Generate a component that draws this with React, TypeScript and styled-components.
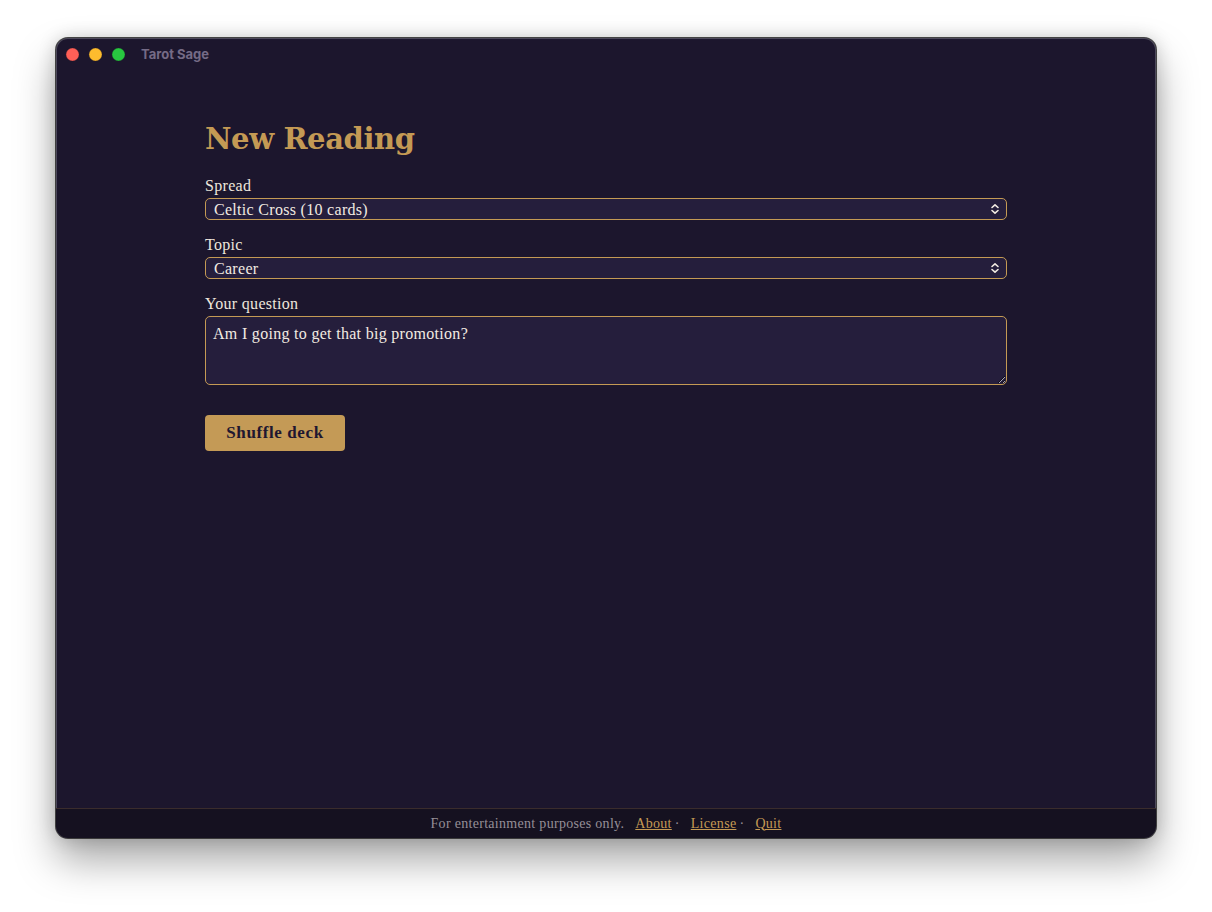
import React, { useState } from 'react';
import styled, { createGlobalStyle } from 'styled-components';

const GlobalStyle = createGlobalStyle`
  html, body {
    margin: 0;
    padding: 0;
    background: #ffffff;
  }
  * {
    box-sizing: border-box;
  }
`;

const Desktop = styled.div`
  width: 1212px;
  height: 912px;
  padding: 38px 56px 0;
  display: flex;
  justify-content: center;
  align-items: flex-start;
`;

const Window = styled.div`
  width: 1100px;
  height: 800px;
  border-radius: 12px;
  background: #1c162d;
  display: flex;
  flex-direction: column;
  overflow: hidden;
  box-shadow: 0 0 0 1px rgba(40, 40, 40, 0.85),
    inset 0 0 0 1px rgba(255, 255, 255, 0.22), 0 22px 40px rgba(0, 0, 0, 0.35),
    0 0 18px rgba(0, 0, 0, 0.18);
`;

const TitleBar = styled.div`
  height: 32px;
  display: flex;
  align-items: center;
  padding: 0 0 0 10px;
  gap: 10px;
  flex-shrink: 0;
`;

const Light = styled.span<{ $color: string }>`
  width: 13px;
  height: 13px;
  border-radius: 50%;
  background: ${(p) => p.$color};
  box-shadow: inset 0 0 0 0.5px rgba(0, 0, 0, 0.2);
`;

const WindowTitle = styled.span`
  margin-left: 6px;
  font-family: 'Inter', 'Liberation Sans', sans-serif;
  font-weight: 700;
  font-size: 13px;
  color: #756b86;
`;

const Main = styled.main`
  flex: 1;
  padding: 52px 0 0;
  display: flex;
  justify-content: center;
`;

const Form = styled.div`
  width: 802px;
  display: flex;
  flex-direction: column;
  font-family: 'Liberation Serif', 'DejaVu Serif', serif;
  letter-spacing: 0.3px;
`;

const Heading = styled.h1`
  margin: 0 0 20px;
  font-family: 'DejaVu Serif', 'Liberation Serif', serif;
  font-size: 29px;
  font-weight: 700;
  color: #c49a54;
  letter-spacing: -0.4px;
`;

const Field = styled.label`
  display: flex;
  flex-direction: column;
  margin-bottom: 15px;
`;

const Label = styled.span`
  font-size: 16px;
  line-height: 20px;
  color: #eee6dc;
  margin-bottom: 2px;
`;

const SelectWrap = styled.div`
  position: relative;
  height: 22px;
`;

const Select = styled.select`
  appearance: none;
  width: 100%;
  height: 22px;
  padding: 0 24px 0 8px;
  border: 1px solid #c49a54;
  border-radius: 5px;
  background: #251e3c;
  color: #f2ebe2;
  font-family: 'Liberation Serif', 'DejaVu Serif', serif;
  font-size: 16px;
  letter-spacing: 0.3px;
  outline: none;
`;

const Chevrons = styled.svg`
  position: absolute;
  right: 6px;
  top: 5px;
  width: 12px;
  height: 12px;
  pointer-events: none;
`;

const TextArea = styled.textarea`
  height: 69px;
  width: 100%;
  padding: 7px 7px;
  border: 1px solid #c49a54;
  border-radius: 5px;
  background: #251e3c;
  color: #f2ebe2;
  font-family: 'Liberation Serif', 'DejaVu Serif', serif;
  font-size: 16px;
  line-height: 20px;
  letter-spacing: 0.3px;
  outline: none;
`;

const ShuffleButton = styled.button`
  align-self: flex-start;
  margin-top: 15px;
  width: 140px;
  height: 36px;
  border: none;
  border-radius: 4px;
  background: #c49a56;
  color: #1f1730;
  font-family: 'Liberation Serif', 'DejaVu Serif', serif;
  font-weight: 700;
  font-size: 17px;
  letter-spacing: 0.6px;
  cursor: pointer;
`;

const Footer = styled.footer`
  height: 30px;
  flex-shrink: 0;
  border-top: 1px solid #3a2c2c;
  background: #151120;
  display: flex;
  justify-content: center;
  align-items: center;
  font-family: 'Liberation Serif', 'DejaVu Serif', serif;
  font-size: 14px;
  letter-spacing: 0.3px;
  color: #968f97;
`;

const Disclaimer = styled.span`
  margin-right: 11px;
`;

const FooterLink = styled.a`
  color: #c49a54;
  text-decoration: underline;
  cursor: pointer;
`;

const Dot = styled.span`
  margin: 0 11px 0 3px;
`;

function UpDown() {
  return (
    <Chevrons viewBox="0 0 12 12" fill="none" stroke="#f2ebe2" strokeWidth="1.6" strokeLinecap="round" strokeLinejoin="round">
      <path d="M3 4.5 L6 1.8 L9 4.5" />
      <path d="M3 7.5 L6 10.2 L9 7.5" />
    </Chevrons>
  );
}

export default function App() {
  const [spread, setSpread] = useState('celtic');
  const [topic, setTopic] = useState('career');
  const [question, setQuestion] = useState('Am I going to get that big promotion?');

  return (
    <>
      <GlobalStyle />
      <Desktop>
        <Window>
          <TitleBar>
            <Light $color="#fe5f57" />
            <Light $color="#febc2e" />
            <Light $color="#28c840" />
            <WindowTitle>Tarot Sage</WindowTitle>
          </TitleBar>
          <Main>
            <Form>
              <Heading>New Reading</Heading>
              <Field>
                <Label>Spread</Label>
                <SelectWrap>
                  <Select value={spread} onChange={(e) => setSpread(e.target.value)}>
                    <option value="single">Single card</option>
                    <option value="three">Past, Present, Future (3 cards)</option>
                    <option value="celtic">Celtic Cross (10 cards)</option>
                  </Select>
                  <UpDown />
                </SelectWrap>
              </Field>
              <Field>
                <Label>Topic</Label>
                <SelectWrap>
                  <Select value={topic} onChange={(e) => setTopic(e.target.value)}>
                    <option value="general">General</option>
                    <option value="love">Love</option>
                    <option value="career">Career</option>
                  </Select>
                  <UpDown />
                </SelectWrap>
              </Field>
              <Field>
                <Label>Your question</Label>
                <TextArea value={question} onChange={(e) => setQuestion(e.target.value)} />
              </Field>
              <ShuffleButton>Shuffle deck</ShuffleButton>
            </Form>
          </Main>
          <Footer>
            <Disclaimer>For entertainment purposes only.</Disclaimer>
            <FooterLink>About</FooterLink>
            <Dot>·</Dot>
            <FooterLink>License</FooterLink>
            <Dot>·</Dot>
            <FooterLink>Quit</FooterLink>
          </Footer>
        </Window>
      </Desktop>
    </>
  );
}
